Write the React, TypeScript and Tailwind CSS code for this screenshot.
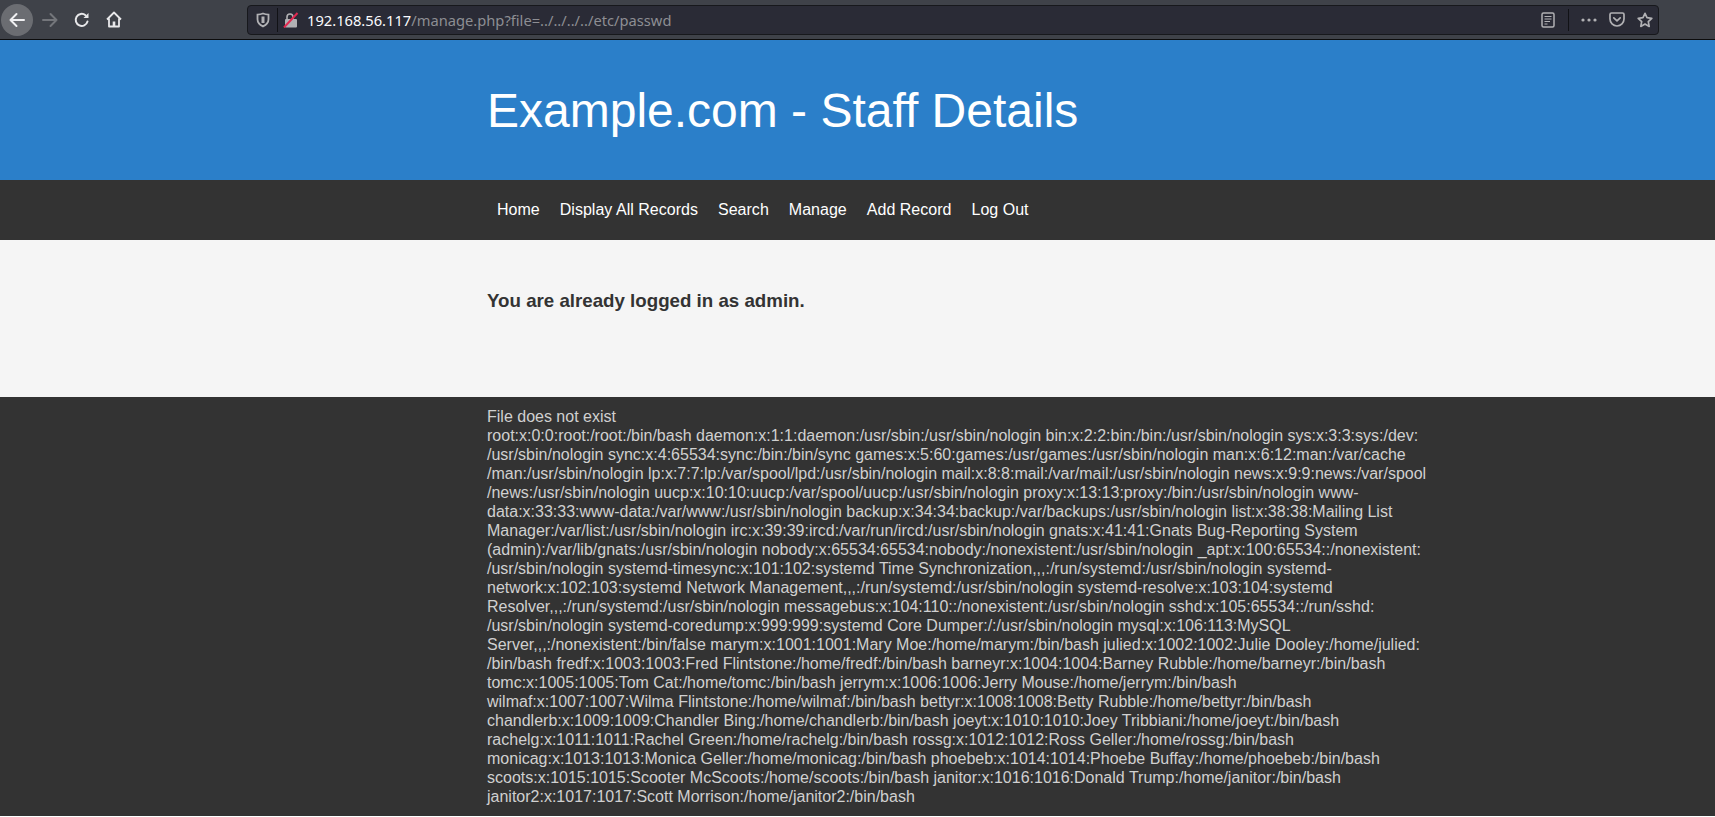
const passwd = [
  "File does not exist",
  "root:x:0:0:root:/root:/bin/bash daemon:x:1:1:daemon:/usr/sbin:/usr/sbin/nologin bin:x:2:2:bin:/bin:/usr/sbin/nologin sys:x:3:3:sys:/dev:",
  "/usr/sbin/nologin sync:x:4:65534:sync:/bin:/bin/sync games:x:5:60:games:/usr/games:/usr/sbin/nologin man:x:6:12:man:/var/cache",
  "/man:/usr/sbin/nologin lp:x:7:7:lp:/var/spool/lpd:/usr/sbin/nologin mail:x:8:8:mail:/var/mail:/usr/sbin/nologin news:x:9:9:news:/var/spool",
  "/news:/usr/sbin/nologin uucp:x:10:10:uucp:/var/spool/uucp:/usr/sbin/nologin proxy:x:13:13:proxy:/bin:/usr/sbin/nologin www-",
  "data:x:33:33:www-data:/var/www:/usr/sbin/nologin backup:x:34:34:backup:/var/backups:/usr/sbin/nologin list:x:38:38:Mailing List",
  "Manager:/var/list:/usr/sbin/nologin irc:x:39:39:ircd:/var/run/ircd:/usr/sbin/nologin gnats:x:41:41:Gnats Bug-Reporting System",
  "(admin):/var/lib/gnats:/usr/sbin/nologin nobody:x:65534:65534:nobody:/nonexistent:/usr/sbin/nologin _apt:x:100:65534::/nonexistent:",
  "/usr/sbin/nologin systemd-timesync:x:101:102:systemd Time Synchronization,,,:/run/systemd:/usr/sbin/nologin systemd-",
  "network:x:102:103:systemd Network Management,,,:/run/systemd:/usr/sbin/nologin systemd-resolve:x:103:104:systemd",
  "Resolver,,,:/run/systemd:/usr/sbin/nologin messagebus:x:104:110::/nonexistent:/usr/sbin/nologin sshd:x:105:65534::/run/sshd:",
  "/usr/sbin/nologin systemd-coredump:x:999:999:systemd Core Dumper:/:/usr/sbin/nologin mysql:x:106:113:MySQL",
  "Server,,,:/nonexistent:/bin/false marym:x:1001:1001:Mary Moe:/home/marym:/bin/bash julied:x:1002:1002:Julie Dooley:/home/julied:",
  "/bin/bash fredf:x:1003:1003:Fred Flintstone:/home/fredf:/bin/bash barneyr:x:1004:1004:Barney Rubble:/home/barneyr:/bin/bash",
  "tomc:x:1005:1005:Tom Cat:/home/tomc:/bin/bash jerrym:x:1006:1006:Jerry Mouse:/home/jerrym:/bin/bash",
  "wilmaf:x:1007:1007:Wilma Flintstone:/home/wilmaf:/bin/bash bettyr:x:1008:1008:Betty Rubble:/home/bettyr:/bin/bash",
  "chandlerb:x:1009:1009:Chandler Bing:/home/chandlerb:/bin/bash joeyt:x:1010:1010:Joey Tribbiani:/home/joeyt:/bin/bash",
  "rachelg:x:1011:1011:Rachel Green:/home/rachelg:/bin/bash rossg:x:1012:1012:Ross Geller:/home/rossg:/bin/bash",
  "monicag:x:1013:1013:Monica Geller:/home/monicag:/bin/bash phoebeb:x:1014:1014:Phoebe Buffay:/home/phoebeb:/bin/bash",
  "scoots:x:1015:1015:Scooter McScoots:/home/scoots:/bin/bash janitor:x:1016:1016:Donald Trump:/home/janitor:/bin/bash",
  "janitor2:x:1017:1017:Scott Morrison:/home/janitor2:/bin/bash",
];

const nav = ["Home", "Display All Records", "Search", "Manage", "Add Record", "Log Out"];

function Toolbar() {
  return (
    <div className="flex h-[40px] items-center bg-[#3f4249] border-b border-b-[#0c0c0d] font-['Noto_Sans',sans-serif]">
      <div className="flex items-center pl-[1px]">
        <div className="flex h-[32px] w-[32px] items-center justify-center rounded-full bg-[#6b6d72]">
          <svg width="18" height="18" viewBox="0 0 18 18" fill="none" stroke="#f0f0f2" strokeWidth="2" strokeLinecap="round" strokeLinejoin="round">
            <path d="M16 9H2.500M8.500 3 2.500 9l6 6" />
          </svg>
        </div>
        <div className="ml-[8px] flex w-[18px] justify-center">
          <svg width="18" height="18" viewBox="0 0 18 18" fill="none" stroke="#74767b" strokeWidth="2" strokeLinecap="round" strokeLinejoin="round">
            <path d="M2 9h13.500M9.500 3l6 6-6 6" />
          </svg>
        </div>
        <div className="ml-[14px] flex w-[18px] justify-center">
          <svg width="16" height="16" viewBox="0 0 16 16" fill="none" stroke="#e8e8ea" strokeWidth="2" strokeLinecap="round">
            <path d="M13.500 9.500A6 6 0 1 1 11.500 3.200" />
            <path d="M14.500 1v5h-5z" fill="#e8e8ea" stroke="none" />
          </svg>
        </div>
        <div className="ml-[14px] flex w-[18px] justify-center">
          <svg width="16" height="17" viewBox="0 0 16 17" fill="none" stroke="#e8e8ea" strokeWidth="1.800" strokeLinejoin="round">
            <path d="M1 8.500 8 1.500l7 7M3 7.500v8h10v-8" />
            <path d="M6.700 15.500v-5h2.600v5" fill="#e8e8ea" stroke="none" />
          </svg>
        </div>
      </div>
      <div className="ml-[124px] flex h-[30px] w-[1412px] items-center rounded-[4px] border border-[#17181c] bg-[#2a2b36]">
        <div className="ml-[4px] flex w-[22px] justify-center">
          <svg width="14" height="16" viewBox="0 0 14 16" fill="none" stroke="#b1b1b4" strokeWidth="1.800">
            <path d="M7 1.500c2 .8 3.800 1.100 5.500 1.200v4.500c0 3.300-2.300 5.700-5.500 7.200C3.800 12.900 1.500 10.500 1.500 7.200V2.700C3.200 2.600 5 2.300 7 1.500z" />
            <path d="M7 4.500v6.500" strokeWidth="3" />
          </svg>
        </div>
        <div className="ml-[3px] h-[24px] w-px bg-[#111216]" />
        <div className="ml-[5px] flex w-[16px] justify-center">
          <svg width="16" height="16" viewBox="0 0 16 16" fill="none">
            <path d="M4 7V5a3 3 0 0 1 6 0v2" stroke="#b1b1b4" strokeWidth="1.600" />
            <rect x="2" y="7" width="12" height="8.500" rx="1" fill="#b1b1b4" />
            <path d="M1 15.500 14.500 1" stroke="#e22850" strokeWidth="2" />
          </svg>
        </div>
        <div className="ml-[8px] whitespace-nowrap text-[14.700px] leading-[20px]">
          <span className="text-[#fbfbfe]">192.168.56.117</span>
          <span className="text-[#8d8e93]">/manage.php?file=../../../../etc/passwd</span>
        </div>
        <div className="ml-auto flex items-center">
          <svg width="14" height="16" viewBox="0 0 14 16" fill="none" stroke="#b1b1b4" strokeWidth="1.500">
            <rect x="1" y="1" width="12" height="14" rx="1.500" />
            <path d="M3.500 4.500h7M3.500 7h7M3.500 9.500h5.500M3.500 12h3" strokeWidth="1" />
          </svg>
          <div className="ml-[13px] h-[22px] w-px bg-[#111216]" />
          <svg className="ml-[12px]" width="16" height="4" viewBox="0 0 16 4" fill="#b1b1b4">
            <circle cx="2" cy="2" r="1.600" /><circle cx="8" cy="2" r="1.600" /><circle cx="14" cy="2" r="1.600" />
          </svg>
          <svg className="ml-[12px]" width="16" height="15" viewBox="0 0 16 15" fill="none" stroke="#b1b1b4" strokeWidth="1.700" strokeLinecap="round" strokeLinejoin="round">
            <path d="M1 2.500Q1 1 2.500 1h11Q15 1 15 2.500V7a7 7 0 0 1-14 0z" />
            <path d="M4.800 5.800 8 8.800l3.200-3" />
          </svg>
          <svg className="ml-[12px] mr-[5px]" width="16" height="16" viewBox="0 0 16 16" fill="none" stroke="#b1b1b4" strokeWidth="1.700" strokeLinejoin="round">
            <path d="m8 1.300 2 4.400 4.800.6-3.500 3.300.9 4.800L8 12l-4.200 2.400.9-4.800L1.200 6.300 6 5.700z" />
          </svg>
        </div>
      </div>
    </div>
  );
}

export default function App() {
  return (
    <div className="min-h-[817px] bg-white font-['Liberation_Sans',Arial,sans-serif]">
      <Toolbar />
      <div className="h-[140px] bg-[#2b7fc9]">
        <h1 className="ml-[487px] pt-[43px] text-[48px] font-normal leading-[55px] text-white">Example.com - Staff Details</h1>
      </div>
      <div className="h-[60px] bg-[#333333]">
        <ul className="ml-[487px] flex h-full items-center pb-[2px]">
          {nav.map((n) => (
            <li key={n} className="px-[10px] text-[16px] leading-[19px] tracking-[0.02px] text-white">{n}</li>
          ))}
        </ul>
      </div>
      <div className="h-[157px] bg-[#f5f5f5]">
        <h2 className="ml-[487px] pt-[50px] text-[18.720px] font-bold leading-[21px] text-[#333333]">You are already logged in as admin.</h2>
      </div>
      <div className="h-[419px] bg-[#333333] pt-[10px] text-[16px] leading-[19px] text-[#d0d0d0]">
        <div className="ml-[487px]">
          {passwd.map((l) => (
            <div key={l} className="whitespace-nowrap">{l}</div>
          ))}
        </div>
      </div>
    </div>
  );
}
